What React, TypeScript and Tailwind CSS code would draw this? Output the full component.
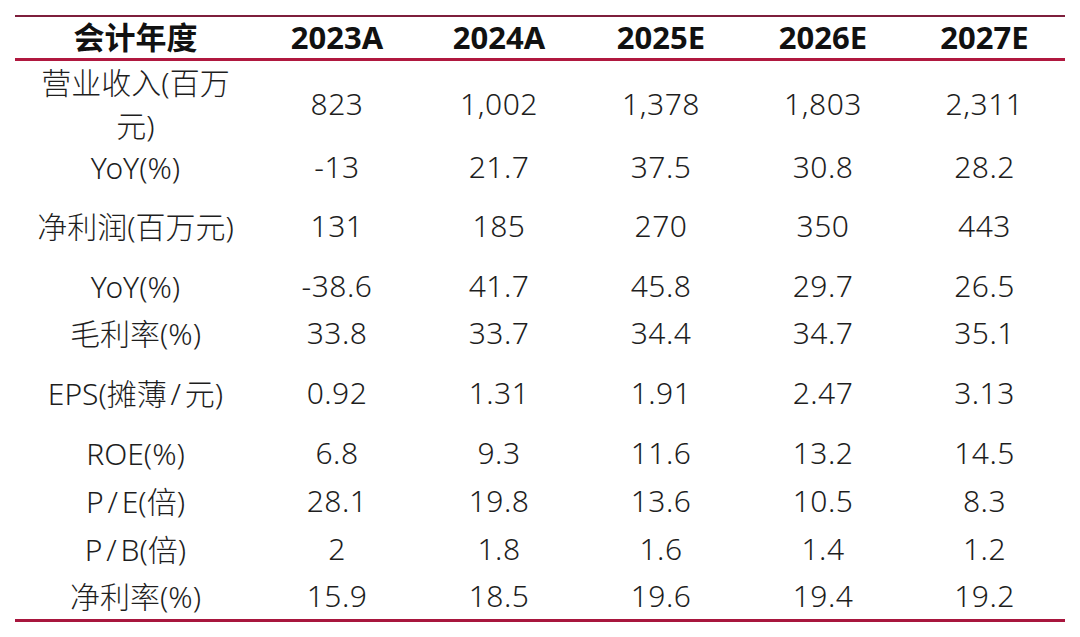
import React from "react";

const cols = ["2023A", "2024A", "2025E", "2026E", "2027E"];

type Row = { label: React.ReactNode; vals: string[]; h: string };

const rows: Row[] = [
  { label: <>营业收入(百万<br />元)</>, vals: ["823", "1,002", "1,378", "1,803", "2,311"], h: "h-[84px]" },
  { label: "YoY(%)", vals: ["-13", "21.7", "37.5", "30.8", "28.2"], h: "h-[44px]" },
  { label: "净利润(百万元)", vals: ["131", "185", "270", "350", "443"], h: "h-[74px]" },
  { label: "YoY(%)", vals: ["-38.6", "41.7", "45.8", "29.7", "26.5"], h: "h-[46px]" },
  { label: "毛利率(%)", vals: ["33.8", "33.7", "34.4", "34.7", "35.1"], h: "h-[48px]" },
  { label: "EPS(摊薄 / 元)", vals: ["0.92", "1.31", "1.91", "2.47", "3.13"], h: "h-[72px]" },
  { label: "ROE(%)", vals: ["6.8", "9.3", "11.6", "13.2", "14.5"], h: "h-[48px]" },
  { label: "P / E(倍)", vals: ["28.1", "19.8", "13.6", "10.5", "8.3"], h: "h-[48px]" },
  { label: "P / B(倍)", vals: ["2", "1.8", "1.6", "1.4", "1.2"], h: "h-[48px]" },
  { label: "净利率(%)", vals: ["15.9", "18.5", "19.6", "19.4", "19.2"], h: "h-[46px]" },
];

export default function App() {
  return (
    <div
      className="w-[1080px] h-[637px] bg-white pt-[15px] px-[15px] text-[#1e1e1e]"
      style={{ fontFamily: '"Noto Sans", "Noto Sans CJK SC", sans-serif' }}
    >
      <div className="w-[1050px] border-t-2 border-[#7e1f3c]">
        <div className="grid grid-cols-[241px_162px_162px_162px_162px_161px] h-[44px] items-center border-b-[3px] border-[#b0183f] font-bold text-[31px] leading-none text-[#111]">
          <div className="text-center">会计年度</div>
          {cols.map((c) => (
            <div key={c} className="text-center">{c}</div>
          ))}
        </div>
        {rows.map((r, i) => (
          <div
            key={i}
            className={`grid grid-cols-[241px_162px_162px_162px_162px_161px] items-center text-[30px] font-light ${r.h}`}
          >
            <div className="text-center leading-[43px] [word-spacing:-4px]">{r.label}</div>
            {r.vals.map((v, j) => (
              <div key={j} className="text-center leading-none tracking-[0.5px]">{v}</div>
            ))}
          </div>
        ))}
        <div className="border-b-[3px] border-[#a8163e]" />
      </div>
    </div>
  );
}
